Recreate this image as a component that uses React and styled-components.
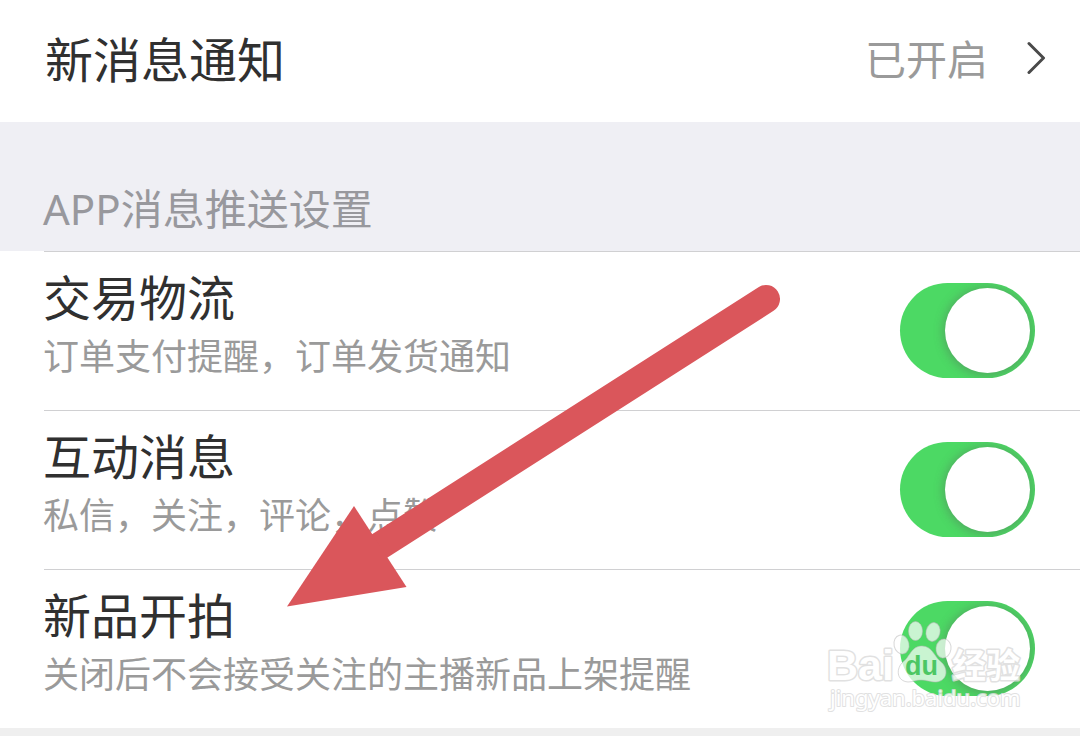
import React, { useState } from 'react';
import styled, { createGlobalStyle } from 'styled-components';

const GlobalStyle = createGlobalStyle`
  * {
    box-sizing: border-box;
  }

  body {
    margin: 0;
    background: #efefef;
    font-family: 'Noto Sans CJK SC', 'Noto Sans', sans-serif;
    color: #303030;
  }
`;

const Page = styled.main`
  position: relative;
`;

const LinkRow = styled.a`
  display: flex;
  align-items: center;
  justify-content: space-between;
  padding: 21px 34px 29px 45px;
  background: #fff;
  color: inherit;
  text-decoration: none;
`;

const LinkTitle = styled.span`
  font-size: 48px;
  line-height: 72px;
`;

const LinkValue = styled.span`
  display: flex;
  align-items: center;
  gap: 38px;
  font-size: 41px;
  line-height: 72px;
  color: #9a9a9a;
`;

const Section = styled.section`
  background: #efeff4;
`;

const SectionTitle = styled.h2`
  margin: 0;
  padding: 57px 43px 12px;
  font-family: 'Noto Sans', 'Noto Sans CJK SC', sans-serif;
  font-size: 42px;
  font-weight: 400;
  line-height: 60px;
  color: #98989d;
`;

const List = styled.ul`
  margin: 0;
  padding: 0;
  list-style: none;
  background: #fff;
`;

const Row = styled.li`
  display: flex;
  align-items: center;
  justify-content: space-between;
  padding: 16px 45px 31px 43px;
  background: linear-gradient(#d0d0d2, #d0d0d2) 44px 0 / 100% 1px no-repeat;
`;

const RowText = styled.label`
  display: flex;
  flex-direction: column;
  gap: 6px;
`;

const RowTitle = styled.span`
  font-size: 48px;
  line-height: 56px;
`;

const RowDescription = styled.span`
  font-size: 36px;
  line-height: 50px;
  color: #9a9a9a;
`;

const Switch = styled.input`
  flex: none;
  appearance: none;
  width: 135px;
  height: 95px;
  margin: 14px 0 0;
  padding: 5px;
  border-radius: 48px;
  background: ${({ checked }) => (checked ? '#4cd964' : '#e5e5ea')};
  overflow: hidden;
  cursor: pointer;

  &::before {
    content: '';
    display: block;
    width: 85px;
    height: 85px;
    margin-left: ${({ checked }) => (checked ? '40px' : '0')};
    border-radius: 50%;
    background: #fff;
    box-shadow: 0 1px 10px 2px rgba(90, 90, 90, 0.36);
  }
`;

const Arrow = styled.svg`
  position: absolute;
  top: 284px;
  left: 286px;
  width: 496px;
  height: 324px;
  pointer-events: none;
`;

const Watermark = styled.svg`
  position: absolute;
  right: 52px;
  bottom: 8px;
  width: 206px;
  height: 112px;
  pointer-events: none;
`;

const ITEMS = [
  { id: 'trade', title: '交易物流', description: '订单支付提醒，订单发货通知' },
  { id: 'social', title: '互动消息', description: '私信，关注，评论，点赞' },
  { id: 'auction', title: '新品开拍', description: '关闭后不会接受关注的主播新品上架提醒' },
];

const ChevronIcon = () => (
  <svg width="20" height="34" viewBox="0 0 20 34" fill="none" aria-hidden="true">
    <path
      d="M3 3.500 L17.500 18 L3 32.500"
      stroke="#4a4a4a"
      strokeWidth="3"
      strokeLinecap="round"
      strokeLinejoin="round"
    />
  </svg>
);

const SettingRow = ({ id, title, description }) => {
  const [checked, setChecked] = useState(true);

  return (
    <Row>
      <RowText htmlFor={id}>
        <RowTitle>{title}</RowTitle>
        <RowDescription>{description}</RowDescription>
      </RowText>
      <Switch
        id={id}
        type="checkbox"
        role="switch"
        checked={checked}
        onChange={(e) => setChecked(e.target.checked)}
      />
    </Row>
  );
};

const PointerArrow = () => (
  <Arrow viewBox="286 284 496 324" aria-hidden="true">
    <path d="M766 299 L378 547" stroke="#da565b" strokeWidth="28" strokeLinecap="round" />
    <path d="M287 606.500 L354 506 L406.500 587 Z" fill="#da565b" />
  </Arrow>
);

const BaiduMark = () => (
  <Watermark viewBox="822 608 206 112">
    <g fill="#fff" fillOpacity="0.7" stroke="#b8b8b8" strokeOpacity="0.55" strokeWidth="1">
      <ellipse cx="915.500" cy="631" rx="7" ry="9.500" />
      <ellipse cx="933" cy="632" rx="7" ry="9.500" transform="rotate(12 933 632)" />
      <ellipse cx="901.500" cy="644.500" rx="7.500" ry="9.500" transform="rotate(-12 901.500 644.500)" />
      <ellipse cx="943.500" cy="648.500" rx="7.500" ry="9.500" transform="rotate(8 943.500 648.500)" />
      <path d="M922 646 C932 646 934 656 940 661 C949 668 948 681 936 682 C930 682 927 680 921 680 C915 680 913 682 908 682 C896 681 896 668 903 662 C910 657 911 646 922 646 Z" />
    </g>
    <g fill="#fff" stroke="#dcdcdc" strokeWidth="3" strokeLinejoin="round" paintOrder="stroke" opacity="0.85">
      <text x="827" y="680" fontSize="43" fontWeight="700" fontFamily="'Liberation Sans', sans-serif">
        Bai
      </text>
      <text x="952" y="678" fontSize="34" fontWeight="700" fontFamily="'Noto Sans CJK SC', sans-serif">
        经验
      </text>
      <text x="830" y="706" fontSize="22" strokeWidth="2" fontFamily="'Noto Sans', sans-serif">
        jingyan.baidu.com
      </text>
    </g>
    <text x="905" y="675" fontSize="27" fontWeight="700" fill="#4cc763" fontFamily="'Liberation Sans', sans-serif">
      du
    </text>
  </Watermark>
);

export default function App() {
  return (
    <>
      <GlobalStyle />
      <Page>
        <LinkRow href="#notifications">
          <LinkTitle>新消息通知</LinkTitle>
          <LinkValue>
            已开启
            <ChevronIcon />
          </LinkValue>
        </LinkRow>
        <Section>
          <SectionTitle>APP消息推送设置</SectionTitle>
          <List>
            {ITEMS.map((item) => (
              <SettingRow key={item.id} {...item} />
            ))}
          </List>
        </Section>
        <PointerArrow />
        <BaiduMark />
      </Page>
    </>
  );
}
